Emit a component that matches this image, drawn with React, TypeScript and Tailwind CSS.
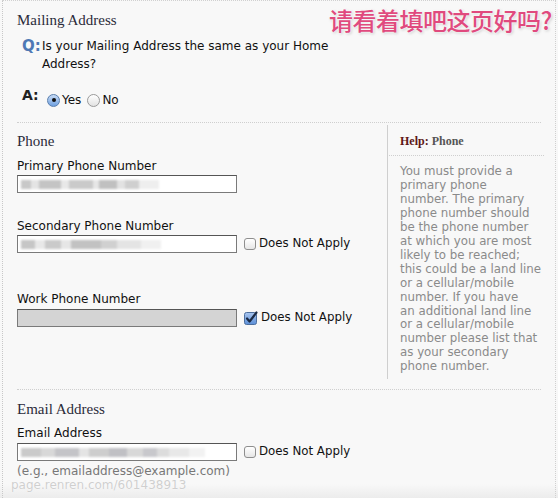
import React from "react";

const sans = "font-['DejaVu_Sans','Liberation_Sans',sans-serif]";
const serif = "font-['Liberation_Serif','DejaVu_Serif',serif]";

function Blur({ blocks }: { blocks: [number, string][] }) {
  return (
    <div className="flex h-full items-center pl-[3px] blur-[1.2px]">
      {blocks.map(([w, c], i) => (
        <div key={i} className="h-[9px]" style={{ width: w, background: c }} />
      ))}
    </div>
  );
}

function Input({ children, disabled }: { children?: React.ReactNode; disabled?: boolean }) {
  return (
    <div
      className={`h-[18px] w-[220px] border border-[#7a7a7a] border-t-[#555] ${
        disabled ? "bg-[#d4d4d4]" : "bg-white"
      }`}
    >
      {children}
    </div>
  );
}

function Check({ checked }: { checked?: boolean }) {
  return checked ? (
    <svg width="14" height="14" viewBox="0 0 14 14" className="shrink-0">
      <defs>
        <linearGradient id="cb" x1="0" y1="0" x2="0" y2="1">
          <stop offset="0" stopColor="#a9c6ef" />
          <stop offset="1" stopColor="#5c8fd8" />
        </linearGradient>
      </defs>
      <rect x="0.5" y="1.5" width="12" height="12" rx="2" fill="url(#cb)" stroke="#4d6f9e" />
      <path d="M3 7.5 L5.6 10.5 L12.5 1.5" stroke="#1b2a44" strokeWidth="2.2" fill="none" strokeLinecap="round" strokeLinejoin="round" />
    </svg>
  ) : (
    <div className="h-[12px] w-[12px] shrink-0 rounded-[3px] border border-[#8e8e8e] bg-gradient-to-b from-white to-[#e6e6e6]" />
  );
}

function Dna({ checked }: { checked?: boolean }) {
  return (
    <div className="ml-[7px] flex items-center gap-[3px]">
      <Check checked={checked} />
      <span className={`${sans} text-[11.8px] text-[#111]`}>Does Not Apply</span>
    </div>
  );
}

function Radio({ on }: { on?: boolean }) {
  return on ? (
    <div className="flex h-[13px] w-[13px] items-center justify-center rounded-full border border-[#5a7fae] bg-gradient-to-b from-[#c9dcf5] to-[#6fa0e0]">
      <div className="h-[4px] w-[4px] rounded-full bg-[#111]" />
    </div>
  ) : (
    <div className="h-[13px] w-[13px] rounded-full border border-[#9a9a9a] bg-gradient-to-b from-white to-[#e3e3e3]" />
  );
}

export default function App() {
  return (
    <div className="relative h-[498px] w-[558px] overflow-hidden bg-[#f8f8f8]">
      <div className="absolute inset-x-0 bottom-0 h-[14px] bg-gradient-to-b from-[#f8f8f8] to-[#ececec]" />
      <div className="relative ml-[2px] mr-[2px] flex h-full flex-col border-l border-r border-t border-dotted border-l-[#c8c8c8] border-r-[#d0d0d0] border-t-[#d0d0d0]">
        {/* Mailing */}
        <div className="pl-[14px] pt-[10px]">
          <div className={`${serif} text-[15px] leading-[18px] text-[#2b2b3a]`}>Mailing Address</div>
          <div className="mt-[8px] flex">
            <span className={`${sans} w-[25px] pl-[5px] text-[15px] font-bold leading-[18px] text-[#4f78b4]`}>Q:</span>
            <span className={`${sans} w-[292px] text-[12px] leading-[18px] text-[#111]`}>
              Is your Mailing Address the same as your Home Address?
            </span>
          </div>
          <div className="mt-[13px] flex items-start">
            <span className={`${sans} w-[30px] pl-[5px] text-[14px] font-bold leading-[18px] text-[#222]`}>A:</span>
            <div className={`${sans} mt-[5px] flex items-center text-[12px] text-[#111]`}>
              <Radio on />
              <span className="ml-[2px]">Yes</span>
              <span className="ml-[6px]">
                <Radio />
              </span>
              <span className="ml-[2px]">No</span>
            </div>
          </div>
        </div>

        <div className="ml-[14px] mt-[13px] w-[524px] border-t border-dotted border-[#cfcfcf]" />

        {/* Phone */}
        <div className="flex">
          <div className="w-[384px] pl-[14px] pt-[9px]">
            <div className={`${serif} text-[15px] leading-[18px] text-[#2b2b3a]`}>Phone</div>
            <div className={`${sans} mt-[8px] text-[12px] leading-[16px] text-[#111]`}>Primary Phone Number</div>
            <div className="mt-[1px]">
              <Input>
                <Blur blocks={[[10, "#c8c8c8"], [8, "#e4e4e4"], [22, "#c4c4c4"], [8, "#e8e8e8"], [24, "#cacaca"], [6, "#e6e6e6"], [18, "#c0c0c0"], [8, "#e2e2e2"], [14, "#cfcfcf"], [20, "#eeeeee"]]} />
              </Input>
            </div>
            <div className={`${sans} mt-[25px] text-[12px] leading-[16px] text-[#111]`}>Secondary Phone Number</div>
            <div className="mt-[1px] flex items-center">
              <Input>
                <Blur blocks={[[14, "#c6c6c6"], [10, "#e8e8e8"], [16, "#cacaca"], [10, "#e6e6e6"], [30, "#c2c2c2"], [16, "#d0d0d0"], [24, "#e4e4e4"], [20, "#f0f0f0"]]} />
              </Input>
              <Dna />
            </div>
            <div className={`${sans} mt-[38px] text-[12px] leading-[16px] text-[#111]`}>Work Phone Number</div>
            <div className="mt-[2px] flex items-center">
              <Input disabled />
              <Dna checked />
            </div>
          </div>

          <div className="mt-[2px] h-[254px] w-[156px] border-l border-[#cfcfcf] pl-[1px]">
            <div className="pl-[11px] pt-[8px]">
              <div className={`${serif} text-[12px] font-bold leading-[16px]`}>
                <span className="text-[#5c1717]">Help:</span> <span className="text-[#555]">Phone</span>
              </div>
            </div>
            <div className="mt-[6px] w-[155px] border-t border-dotted border-[#cfcfcf]" />
            <div className={`${sans} pl-[11px] pt-[9px] text-[11.8px] leading-[13.95px] text-[#8a8a8a]`}>
              You must provide a<br />
              primary phone<br />
              number. The primary<br />
              phone number should<br />
              be the phone number<br />
              at which you are most<br />
              likely to be reached;<br />
              this could be a land line<br />
              or a cellular/mobile<br />
              number. If you have<br />
              an additional land line<br />
              or a cellular/mobile<br />
              number please list that<br />
              as your secondary<br />
              phone number.
            </div>
          </div>
        </div>

        <div className="ml-[14px] mt-[10px] w-[524px] border-t border-dotted border-[#cfcfcf]" />

        {/* Email */}
        <div className="pl-[14px] pt-[10px]">
          <div className={`${serif} text-[15px] leading-[18px] text-[#2b2b3a]`}>Email Address</div>
          <div className={`${sans} mt-[7px] text-[12px] leading-[16px] text-[#111]`}>Email Address</div>
          <div className="mt-[2px] flex items-center">
            <Input>
              <Blur blocks={[[20, "#cacaca"], [14, "#d8d8d8"], [24, "#c4c4c8"], [10, "#e4e4e4"], [20, "#cdcdcd"], [18, "#c0c0c4"], [16, "#d8d8d8"], [14, "#c8c8cc"], [12, "#dcdcdc"], [20, "#e8e8e8"], [16, "#f2f2f2"]]} />
            </Input>
            <Dna />
          </div>
          <div className={`${sans} mt-[2px] text-[12px] leading-[16px] text-[#777]`}>(e.g., emailaddress@example.com)</div>
        </div>
      </div>

      {/* watermark */}
      <div className={`${sans} absolute left-[11px] top-[477px] text-[12px] leading-[16px] text-[#cfcfcf] [text-shadow:0_0_1px_#fff,0_0_1px_#fff]`}>
        page.renren.com/601438913
      </div>

      {/* overlay caption */}
      <div className="absolute left-[329px] top-[5px] font-['Noto_Sans_CJK_SC',sans-serif] text-[24px] font-medium leading-[30px] tracking-[-0.5px] text-[#e04a7e] [text-shadow:0_0_2px_#fff,0_0_3px_#fff,1px_1px_3px_#bbb]">
        请看着填吧这页好吗?
      </div>
    </div>
  );
}
